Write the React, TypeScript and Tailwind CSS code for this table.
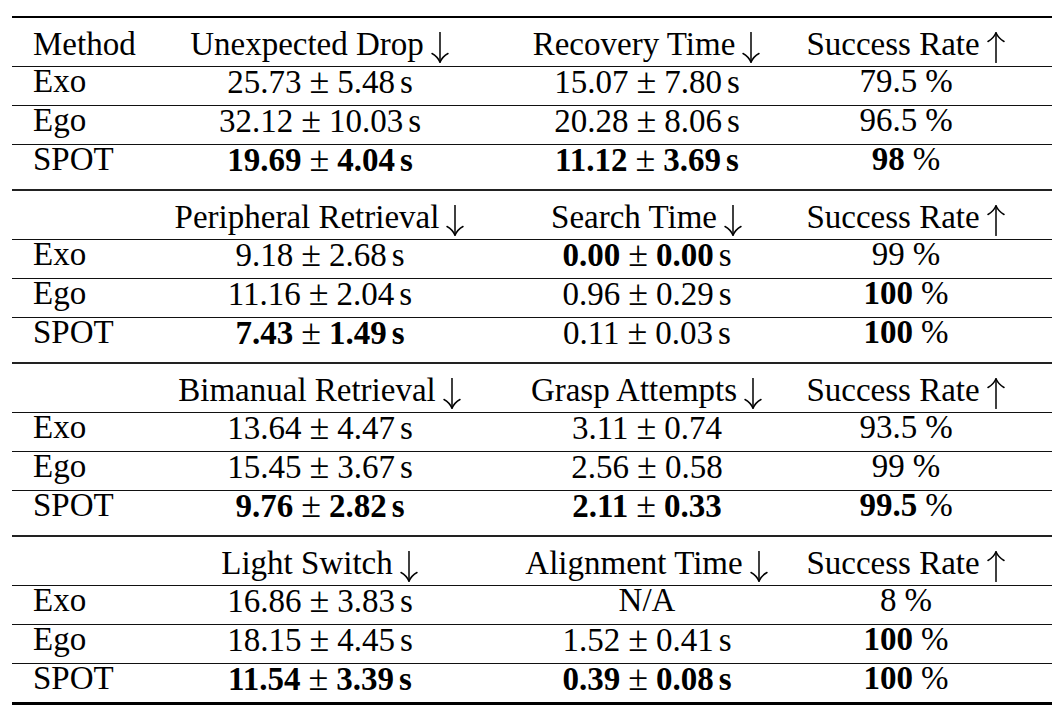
import React from "react";

type Cell = React.ReactNode;

function Arrow({ up = false }: { up?: boolean }) {
  return (
    <svg
      width="20"
      height="31"
      viewBox="0 0 20 31"
      className="inline-block align-[-8px] ml-[6px]"
      fill="none"
      stroke="#000"
      strokeWidth="1.5"
      strokeLinecap="round"
    >
      {up ? (
        <>
          <path d="M10 30.5V1" />
          <path d="M2 9.5Q7.5 6.5 10 0.8Q12.5 6.5 18 9.5" />
        </>
      ) : (
        <>
          <path d="M10 0.5V30" />
          <path d="M2 21.5Q7.5 24.5 10 30.2Q12.5 24.5 18 21.5" />
        </>
      )}
    </svg>
  );
}

function V({ a, b, bold = false, s = true, sBold }: { a: string; b: string; bold?: boolean; s?: boolean; sBold?: boolean }) {
  const w = bold ? "font-bold" : "";
  const sb = (sBold ?? bold) ? "font-bold" : "";
  return (
    <span className="whitespace-nowrap">
      <span className={w}>{a}</span>
      <span className="mx-[8px] text-[36px] font-normal">±</span>
      <span className={w}>{b}</span>
      {s && <span className={`ml-[5px] ${sb}`}>s</span>}
    </span>
  );
}

function P({ v, bold = false }: { v: string; bold?: boolean }) {
  return (
    <span className="whitespace-nowrap">
      <span className={bold ? "font-bold" : ""}>{v}</span>
      <span className="ml-[8px]">%</span>
    </span>
  );
}

type Section = { head: string[]; rows: [string, Cell, Cell, Cell][] };

const sections: Section[] = [
  {
    head: ["Method", "Unexpected Drop", "Recovery Time", "Success Rate"],
    rows: [
      ["Exo", <V a="25.73" b="5.48" />, <V a="15.07" b="7.80" />, <P v="79.5" />],
      ["Ego", <V a="32.12" b="10.03" />, <V a="20.28" b="8.06" />, <P v="96.5" />],
      ["SPOT", <V a="19.69" b="4.04" bold />, <V a="11.12" b="3.69" bold />, <P v="98" bold />],
    ],
  },
  {
    head: ["", "Peripheral Retrieval", "Search Time", "Success Rate"],
    rows: [
      ["Exo", <V a="9.18" b="2.68" />, <V a="0.00" b="0.00" bold sBold={false} />, <P v="99" />],
      ["Ego", <V a="11.16" b="2.04" />, <V a="0.96" b="0.29" />, <P v="100" bold />],
      ["SPOT", <V a="7.43" b="1.49" bold />, <V a="0.11" b="0.03" />, <P v="100" bold />],
    ],
  },
  {
    head: ["", "Bimanual Retrieval", "Grasp Attempts", "Success Rate"],
    rows: [
      ["Exo", <V a="13.64" b="4.47" />, <V a="3.11" b="0.74" s={false} />, <P v="93.5" />],
      ["Ego", <V a="15.45" b="3.67" />, <V a="2.56" b="0.58" s={false} />, <P v="99" />],
      ["SPOT", <V a="9.76" b="2.82" bold />, <V a="2.11" b="0.33" bold s={false} />, <P v="99.5" bold />],
    ],
  },
  {
    head: ["", "Light Switch", "Alignment Time", "Success Rate"],
    rows: [
      ["Exo", <V a="16.86" b="3.83" />, <span>N/A</span>, <P v="8" />],
      ["Ego", <V a="18.15" b="4.45" />, <V a="1.52" b="0.41" />, <P v="100" bold />],
      ["SPOT", <V a="11.54" b="3.39" bold />, <V a="0.39" b="0.08" bold />, <P v="100" bold />],
    ],
  },
];

const grid = "grid grid-cols-[148px_320px_334px_184px]";

function Row({ cells, tall = false }: { cells: Cell[]; tall?: boolean }) {
  return (
    <div className={`${grid} ${tall ? "h-[44px]" : "h-[38px]"} leading-[28px]`}>
      <div className="pl-[21px]">{cells[0]}</div>
      <div className="flex justify-center">{cells[1]}</div>
      <div className="flex justify-center">{cells[2]}</div>
      <div className="flex justify-center">{cells[3]}</div>
    </div>
  );
}

function Head({ text, up = false }: { text: string; up?: boolean }) {
  return (
    <div className="flex justify-center">
      <span className="whitespace-nowrap">
        {text}
        <Arrow up={up} />
      </span>
    </div>
  );
}

export default function App() {
  return (
    <div className="w-[1064px] h-[716px] bg-white text-black font-['Liberation_Serif',serif] text-[33px] pt-[16px] px-[12px] overflow-hidden">
      <div className="h-[2px] bg-black" />
      {sections.map((sec, si) => (
        <div key={si}>
          <div className={`${grid} h-[48px] pt-[12px] leading-[28px]`}>
            <div className="pl-[21px]">{sec.head[0]}</div>
            <Head text={sec.head[1]} />
            <Head text={sec.head[2]} />
            <Head text={sec.head[3]} up />
          </div>
          <div className="h-px bg-[#111]" />
          <Row cells={sec.rows[0]} />
          <div className="h-px bg-[#111]" />
          <Row cells={sec.rows[1]} />
          <div className="h-px bg-[#111]" />
          <Row cells={sec.rows[2]} tall={si < 3} />
          {si < 3 ? <div className="h-[2px] bg-[#222]" /> : <div className="h-[3px] bg-black" />}
        </div>
      ))}
    </div>
  );
}
